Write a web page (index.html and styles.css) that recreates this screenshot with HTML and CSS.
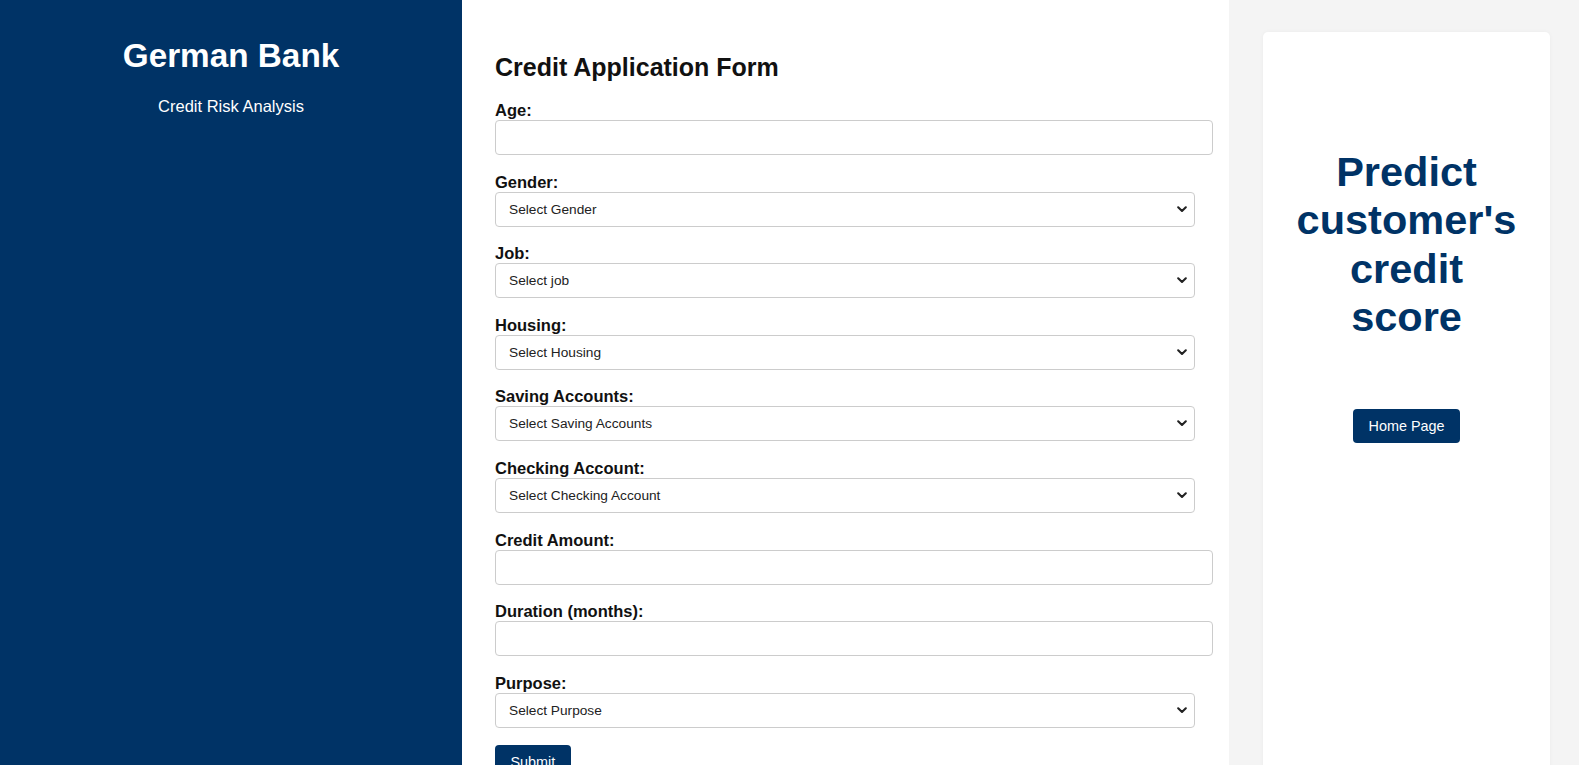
FILE: index.html
```html
<!DOCTYPE html>
<html lang="en">
<head>
<meta charset="utf-8">
<title>German Bank - Credit Risk Analysis</title>
<link rel="stylesheet" href="styles.css">
</head>
<body>
<div class="layout">
  <aside class="sidebar">
    <h1 class="brand">German Bank</h1>
    <p class="tagline">Credit Risk Analysis</p>
  </aside>

  <main class="main">
    <h2 class="form-title">Credit Application Form</h2>
    <form class="form">
      <label class="field-label" for="age">Age:</label>
      <input class="field-input" id="age" type="text">

      <label class="field-label" for="gender">Gender:</label>
      <select class="field-select" id="gender"><option>Select Gender</option></select>

      <label class="field-label" for="job">Job:</label>
      <select class="field-select" id="job"><option>Select job</option></select>

      <label class="field-label" for="housing">Housing:</label>
      <select class="field-select" id="housing"><option>Select Housing</option></select>

      <label class="field-label" for="saving">Saving Accounts:</label>
      <select class="field-select" id="saving"><option>Select Saving Accounts</option></select>

      <label class="field-label" for="checking">Checking Account:</label>
      <select class="field-select" id="checking"><option>Select Checking Account</option></select>

      <label class="field-label" for="amount">Credit Amount:</label>
      <input class="field-input" id="amount" type="text">

      <label class="field-label" for="duration">Duration (months):</label>
      <input class="field-input" id="duration" type="text">

      <label class="field-label" for="purpose">Purpose:</label>
      <select class="field-select" id="purpose"><option>Select Purpose</option></select>

      <button class="btn" type="button">Submit</button>
    </form>
  </main>

  <section class="aside-panel">
    <div class="card">
      <h2 class="card-title">Predict customer's credit score</h2>
      <button class="btn" type="button">Home Page</button>
    </div>
  </section>
</div>
</body>
</html>
```

FILE: styles.css
```css
* {
  box-sizing: border-box;
}

html, body {
  margin: 0;
  padding: 0;
  height: 100%;
  overflow: hidden;
}

body {
  font-family: "Liberation Sans", Arial, sans-serif;
  color: #111;
  background: #f4f4f4;
}

.layout {
  display: flex;
  height: 100vh;
}

.sidebar {
  width: 462px;
  flex: 0 0 462px;
  background: #003366;
  color: #ffffff;
  text-align: center;
  padding: 36.6px 20px 0;
}

.brand {
  margin: 0;
  font-size: 33.3px;
  font-weight: bold;
  line-height: 38px;
}

.tagline {
  margin: 22px 0 0;
  font-size: 16.5px;
  line-height: 19px;
}

.main {
  width: 767px;
  flex: 0 0 767px;
  background: #ffffff;
  padding: 52.6px 33px 0;
}

.form-title {
  margin: 0 0 20px;
  font-size: 25px;
  line-height: 28.4px;
  font-weight: bold;
  color: #111;
}

.form {
  display: flex;
  flex-direction: column;
  align-items: flex-start;
}

.field-label {
  display: block;
  font-size: 16.5px;
  line-height: 19px;
  font-weight: bold;
  color: #111;
}

.field-input {
  display: block;
  width: 718px;
  height: 35px;
  margin: 0 0 17.6px;
  padding: 8px;
  border: 1px solid #cccccc;
  border-radius: 4px;
  font-family: inherit;
  font-size: 14px;
  background: #fff;
}

.field-select {
  display: block;
  width: 700px;
  height: 35px;
  margin: 0 0 17.6px;
  padding: 0 30px 0 13px;
  border: 1px solid #cccccc;
  border-radius: 4px;
  font-family: inherit;
  font-size: 13.7px;
  color: #222;
  -webkit-appearance: none;
  appearance: none;
  background-color: #fff;
  background-image: url("data:image/svg+xml,%3Csvg xmlns='http://www.w3.org/2000/svg' width='10' height='7' viewBox='0 0 10 7'%3E%3Cpath d='M1.2 1.3 L5 5 L8.8 1.3' fill='none' stroke='%23222' stroke-width='2.1' stroke-linecap='round' stroke-linejoin='round'/%3E%3C/svg%3E");
  background-repeat: no-repeat;
  background-position: right 7px center;
  background-size: 10px 7px;
}

.btn {
  display: inline-block;
  padding: 8.4px 15.4px;
  border: none;
  border-radius: 4px;
  background: #003366;
  color: #ffffff;
  font-family: inherit;
  font-size: 14.4px;
  line-height: 16.6px;
  cursor: pointer;
}

.aside-panel {
  flex: 1 1 auto;
  background: #f4f4f4;
  padding: 32px 29px 0 34px;
}

.card {
  background: #ffffff;
  border-radius: 5px;
  height: 800px;
  padding: 116px 30px 0;
  text-align: center;
  box-shadow: 0 0 4px rgba(0, 0, 0, 0.04);
}

.card-title {
  margin: 0 0 68px;
  font-size: 41.5px;
  line-height: 48.3px;
  font-weight: bold;
  color: #003366;
}
```
